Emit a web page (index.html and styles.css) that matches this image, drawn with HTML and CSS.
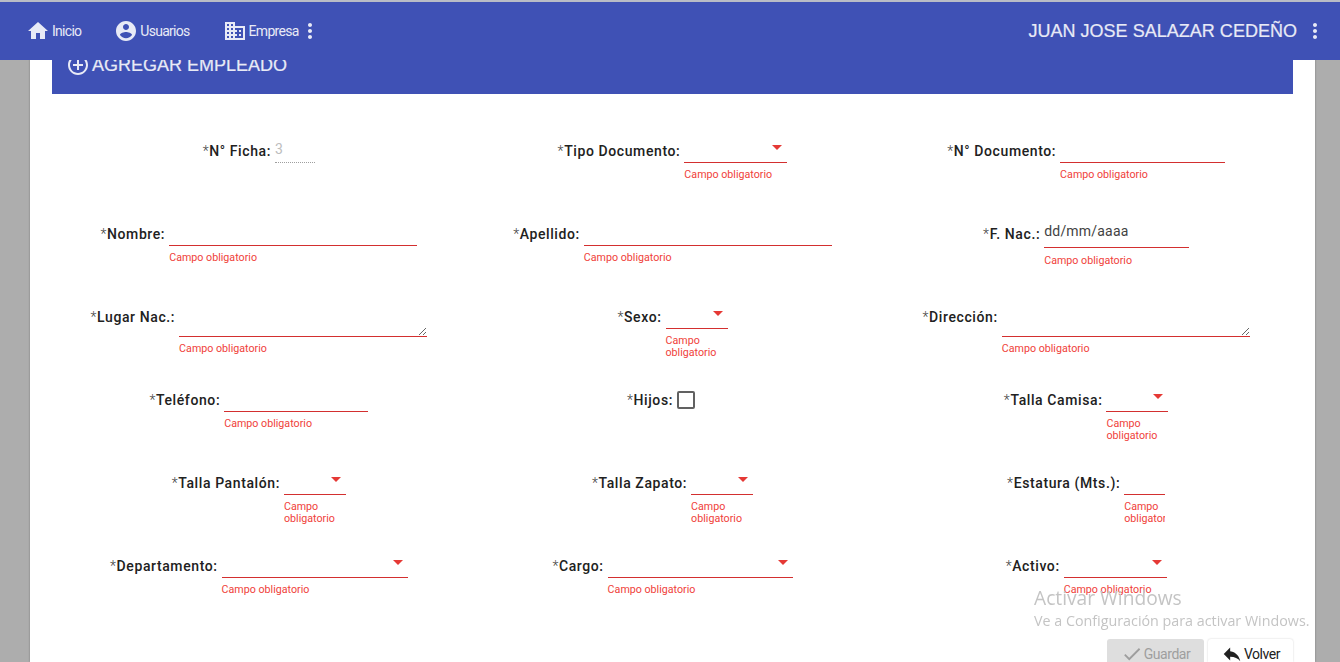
FILE: index.html
```html
<!DOCTYPE html>
<html lang="es">
<head>
<meta charset="utf-8">
<title>Agregar empleado</title>
<link rel="stylesheet" href="styles.css">
</head>
<body>
<header class="toolbar">
  <nav class="nav">
    <a class="nav-item nav-home"><svg class="ico" viewBox="0 0 24 24"><path d="M10 20v-6h4v6h5v-8h3L12 3 2 12h3v8z"/></svg>Inicio</a>
    <a class="nav-item nav-users"><svg class="ico" viewBox="0 0 24 24"><path d="M12 2C6.48 2 2 6.48 2 12s4.48 10 10 10 10-4.48 10-10S17.52 2 12 2zm0 3c1.66 0 3 1.34 3 3s-1.34 3-3 3-3-1.34-3-3 1.34-3 3-3zm0 14.2c-2.5 0-4.71-1.28-6-3.22.03-1.99 4-3.08 6-3.08 1.99 0 5.97 1.09 6 3.08-1.29 1.94-3.5 3.22-6 3.22z"/></svg>Usuarios</a>
    <a class="nav-item nav-company"><svg class="ico" viewBox="0 0 24 24"><path d="M12 7V3H2v18h20V7H12zM6 19H4v-2h2v2zm0-4H4v-2h2v2zm0-4H4V9h2v2zm0-4H4V5h2v2zm4 12H8v-2h2v2zm0-4H8v-2h2v2zm0-4H8V9h2v2zm0-4H8V5h2v2zm10 12h-8v-2h2v-2h-2v-2h2v-2h-2V9h8v10zm-2-8h-2v2h2v-2zm0 4h-2v2h2v-2z"/></svg>Empresa<svg class="ico dots" viewBox="0 0 24 24"><path d="M12 8c1.1 0 2-.9 2-2s-.9-2-2-2-2 .9-2 2 .9 2 2 2zm0 2c-1.1 0-2 .9-2 2s.9 2 2 2 2-.9 2-2-.9-2-2-2zm0 6c-1.1 0-2 .9-2 2s.9 2 2 2 2-.9 2-2-.9-2-2-2z"/></svg></a>
  </nav>
  <div class="user">
    <span class="user-name">JUAN JOSE SALAZAR CEDEÑO</span>
    <svg class="ico dots" viewBox="0 0 24 24"><path d="M12 8c1.1 0 2-.9 2-2s-.9-2-2-2-2 .9-2 2 .9 2 2 2zm0 2c-1.1 0-2 .9-2 2s.9 2 2 2 2-.9 2-2-.9-2-2-2zm0 6c-1.1 0-2 .9-2 2s.9 2 2 2 2-.9 2-2-.9-2-2-2z"/></svg>
  </div>
</header>

<main class="card">
  <div class="card-head">
    <svg class="ico head-ico" viewBox="0 0 24 24"><path d="M13 7h-2v4H7v2h4v4h2v-4h4v-2h-4V7zm-1-5C6.48 2 2 6.48 2 12s4.48 10 10 10 10-4.48 10-10S17.52 2 12 2zm0 18c-4.41 0-8-3.59-8-8s3.59-8 8-8 8 3.59 8 8-3.59 8-8 8z"/></svg>
    <span>AGREGAR EMPLEADO</span>
  </div>

  <form class="form">
    <div class="field"><label class="label"><i>*</i>N° Ficha:</label><div class="control w-40 ctl-dotted"><span class="value-off">3</span></div></div>
    <div class="field"><label class="label"><i>*</i>Tipo Documento:</label><div class="control-wrap w-103"><div class="control select"></div><p class="error">Campo obligatorio</p></div></div>
    <div class="field"><label class="label"><i>*</i>N° Documento:</label><div class="control-wrap w-165"><div class="control"></div><p class="error">Campo obligatorio</p></div></div>

    <div class="field"><label class="label"><i>*</i>Nombre:</label><div class="control-wrap w-248"><div class="control"></div><p class="error">Campo obligatorio</p></div></div>
    <div class="field"><label class="label"><i>*</i>Apellido:</label><div class="control-wrap w-248"><div class="control"></div><p class="error">Campo obligatorio</p></div></div>
    <div class="field"><label class="label"><i>*</i>F. Nac.:</label><div class="control-wrap w-145"><div class="control date"><span class="value">dd/mm/aaaa</span></div><p class="error">Campo obligatorio</p></div></div>

    <div class="field"><label class="label"><i>*</i>Lugar Nac.:</label><div class="control-wrap w-248"><textarea class="area"></textarea><p class="error">Campo obligatorio</p></div></div>
    <div class="field"><label class="label"><i>*</i>Sexo:</label><div class="control-wrap w-62"><div class="control select"></div><p class="error">Campo obligatorio</p></div></div>
    <div class="field"><label class="label"><i>*</i>Dirección:</label><div class="control-wrap w-248"><textarea class="area"></textarea><p class="error">Campo obligatorio</p></div></div>

    <div class="field"><label class="label"><i>*</i>Teléfono:</label><div class="control-wrap w-144"><div class="control"></div><p class="error">Campo obligatorio</p></div></div>
    <div class="field"><label class="label"><i>*</i>Hijos:</label><span class="check"></span></div>
    <div class="field"><label class="label"><i>*</i>Talla Camisa:</label><div class="control-wrap w-62"><div class="control select"></div><p class="error">Campo obligatorio</p></div></div>

    <div class="field"><label class="label"><i>*</i>Talla Pantalón:</label><div class="control-wrap w-62"><div class="control select"></div><p class="error">Campo obligatorio</p></div></div>
    <div class="field"><label class="label"><i>*</i>Talla Zapato:</label><div class="control-wrap w-62"><div class="control select"></div><p class="error">Campo obligatorio</p></div></div>
    <div class="field"><label class="label"><i>*</i>Estatura (Mts.):</label><div class="control-wrap w-41 clip"><div class="control"></div><p class="error">Campo obligatorio</p></div></div>

    <div class="field"><label class="label"><i>*</i>Departamento:</label><div class="control-wrap w-186"><div class="control select"></div><p class="error">Campo obligatorio</p></div></div>
    <div class="field"><label class="label"><i>*</i>Cargo:</label><div class="control-wrap w-185"><div class="control select"></div><p class="error">Campo obligatorio</p></div></div>
    <div class="field"><label class="label"><i>*</i>Activo:</label><div class="control-wrap w-103"><div class="control select"></div><p class="error">Campo obligatorio</p></div></div>
  </form>

  <div class="actions">
    <button class="btn btn-off" type="button"><svg class="ico btn-ico" viewBox="0 0 24 24"><path d="M9 16.17L4.83 12l-1.42 1.41L9 19 21 7l-1.41-1.41z"/></svg>Guardar</button>
    <button class="btn btn-back" type="button"><svg class="ico btn-ico" viewBox="0 0 24 24"><path d="M10 9V5l-7 7 7 7v-4.1c5 0 8.5 1.6 11 5.1-1-5-4-10-11-11z"/></svg>Volver</button>
  </div>
</main>

<aside class="watermark">
  <div class="wm-title">Activar Windows</div>
  <div class="wm-sub">Ve a Configuración para activar Windows.</div>
</aside>
</body>
</html>
```

FILE: styles.css
```css
* { box-sizing: border-box; }

html, body {
  margin: 0;
  height: 100%;
  overflow: hidden;
}

body {
  background: #adadad;
  font-family: Roboto, "Liberation Sans", sans-serif;
  color: #212121;
}

.ico {
  display: block;
  width: 24px;
  height: 24px;
  fill: currentColor;
  flex: none;
}

.toolbar {
  position: fixed;
  top: 0;
  left: 0;
  right: 0;
  z-index: 5;
  height: 60px;
  border-top: 2px solid #b9bcc6;
  background: #3f51b5;
  color: #e8eaf6;
  display: flex;
  align-items: center;
  justify-content: space-between;
  padding: 0 13px 0 26px;
}

.nav { display: flex; align-items: center; }

.nav-item {
  display: flex;
  align-items: center;
  gap: 2px;
  font-size: 14px;
  letter-spacing: -0.72px;
  color: #e8eaf6;
}

.nav-users { margin-left: 33px; }
.nav-company { margin-left: 33px; }
.nav-company .dots { margin-left: -3px; }

.user { display: flex; align-items: center; gap: 6px; }
.user-name {
  font-size: 18px;
  font-family: "Liberation Sans", Arial, sans-serif;
  letter-spacing: 0.02px;
  -webkit-text-stroke: 0.2px currentColor;
}

.card {
  margin: 0 25px 0 30px;
  height: 100%;
  padding: 0 22px;
  overflow: hidden;
  background: #fff;
  box-shadow: 0 0 2px rgba(0, 0, 0, .3);
}

.card-head {
  height: 94px;
  padding: 53px 0 0 14px;
  background: #3f51b5;
  color: #e8eaf6;
  display: flex;
  align-items: flex-start;
  gap: 2px;
  font-family: "Liberation Sans", Arial, sans-serif;
  font-size: 18px;
  line-height: 24px;
  -webkit-text-stroke: 0.2px currentColor;
}

.form {
  padding-top: 36px;
  display: grid;
  grid-template-columns: repeat(3, 1fr);
  grid-auto-rows: 83px;
}

.field {
  display: flex;
  justify-content: center;
  align-items: flex-start;
  gap: 4px;
}

.label {
  margin-top: 11px;
  font-size: 14px;
  line-height: 20px;
  font-weight: 500;
  letter-spacing: 0.6px;
  white-space: nowrap;
  color: #212121;
}

.label i {
  font-style: normal;
  font-weight: 300;
  color: #424242;
}

.control-wrap { flex: none; }
.clip { overflow: hidden; }

.w-40 { width: 40px; }
.w-41 { width: 41px; }
.w-62 { width: 62px; }
.w-103 { width: 103px; }
.w-144 { width: 144px; }
.w-145 { width: 145px; }
.w-165 { width: 165px; }
.w-185 { width: 185px; }
.w-186 { width: 186px; }
.w-248 { width: 248px; }

.control {
  position: relative;
  height: 33px;
  border-bottom: 1px solid #d32f2f;
}

.ctl-dotted {
  border-bottom: 1px dotted #9e9e9e;
  flex: none;
}

.value-off {
  display: block;
  padding-top: 10px;
  font-size: 14px;
  line-height: 18px;
  color: #bdbdbd;
}

.date { height: 35px; margin-bottom: 7px; }

.value {
  display: block;
  padding-top: 9px;
  font-size: 14px;
  line-height: 18px;
  letter-spacing: 0.2px;
  color: #424242;
}

.select::after {
  content: "";
  position: absolute;
  right: 5px;
  top: 15px;
  border-left: 5px solid transparent;
  border-right: 5px solid transparent;
  border-top: 5px solid #e53935;
}

.area {
  display: block;
  width: 100%;
  height: 41px;
  margin: 0;
  padding: 0;
  border: 0;
  border-bottom: 1px solid #d32f2f;
  border-radius: 0;
  outline: 0;
  background: transparent;
}

.error {
  margin: 6px 0 0;
  font-size: 10.7px;
  line-height: 12px;
  color: #f0413a;
}

.check {
  width: 18px;
  height: 18px;
  margin-top: 12px;
  margin-right: 23px;
  border: 2px solid #616161;
  border-radius: 2px;
}

.actions {
  display: flex;
  justify-content: flex-end;
  gap: 4px;
  margin-top: 11px;
}

.btn {
  display: flex;
  align-items: center;
  justify-content: center;
  gap: 1px;
  height: 23px;
  margin: 0;
  padding: 7px 0 0;
  border: 0;
  border-radius: 3px 3px 0 0;
  font-family: Roboto, "Liberation Sans", sans-serif;
  font-size: 14px;
  letter-spacing: -0.45px;
}

.btn-ico { width: 22px; height: 22px; }
.btn-off { width: 97px; background: #dedede; color: #9e9e9e; }
.btn-back { width: 85px; background: #fff; color: #212121; box-shadow: 0 0 2px rgba(0, 0, 0, .2); }

.watermark {
  position: fixed;
  left: 1034px;
  top: 585px;
  z-index: 4;
  color: #c4c4c4;
  font-family: "Open Sans", sans-serif;
  white-space: nowrap;
  pointer-events: none;
}

.wm-title { font-size: 19.2px; line-height: 26px; }
.wm-sub { font-size: 14.3px; line-height: 20px; }
```
